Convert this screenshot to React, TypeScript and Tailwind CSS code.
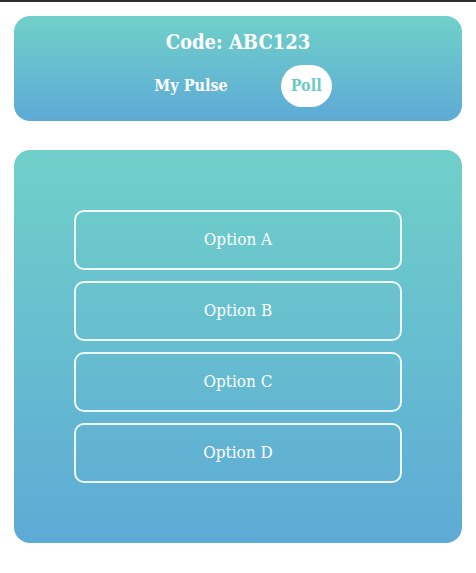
import React from "react";

const options = ["Option A", "Option B", "Option C", "Option D"];

export default function App() {
  return (
    <div
      className="min-h-[573px] bg-white border-t-2 border-[#2e2e2e] px-[14px] pt-[14px]"
      style={{ fontFamily: '"DejaVu Serif Condensed", "DejaVu Serif", "Liberation Serif", serif' }}
    >
      {/* header */}
      <div className="rounded-[16px] bg-gradient-to-b from-[#70d0c8] to-[#5eaad6] pt-[12px] pb-[14px] flex flex-col items-center">
        <h1 className="text-white text-[20px] leading-[28px] font-bold">Code: ABC123</h1>
        <div className="mt-[9px] flex items-center gap-[43px]">
          <button className="h-[42px] px-[10px] text-white text-[16px] font-bold">My Pulse</button>
          <button className="h-[42px] px-[10px] rounded-full bg-white text-[#6ccbc6] text-[16px] font-bold">Poll</button>
        </div>
      </div>

      {/* poll */}
      <div className="mt-[29px] rounded-[16px] bg-gradient-to-b from-[#70d0c8] to-[#5eaad6] p-[60px] flex flex-col gap-[11px]">
        {options.map((o) => (
          <button
            key={o}
            className="h-[60px] w-full rounded-[10px] border-2 border-white/90 text-white text-[17px] font-medium"
          >
            {o}
          </button>
        ))}
      </div>
    </div>
  );
}
